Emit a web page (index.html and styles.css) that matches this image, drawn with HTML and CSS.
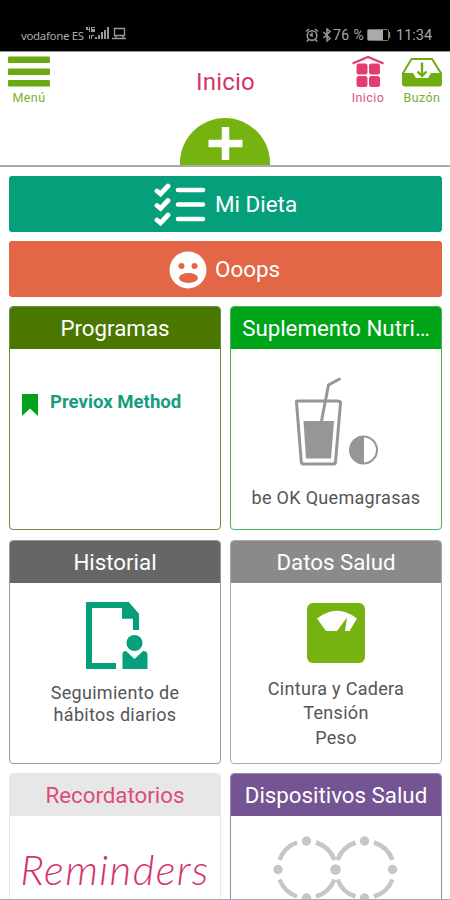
FILE: index.html
```html
<!DOCTYPE html>
<html lang="es">
<head>
<meta charset="utf-8">
<title>Inicio</title>
<link rel="stylesheet" href="styles.css">
</head>
<body>
<div class="screen">
  <div class="status">
    <div class="status-left">
      <span class="carrier">vodafone ES</span>
      <svg width="42" height="16" viewBox="0 0 42 16" fill="#999">
        <path d="M1 1h2v2h1V1h1v5H4V4H1zM6 1h4v1H7v1h3v3H6zM4 9h1v4H4zM6 9h3v1H7v3H6z"/>
        <path d="M10 11h2v2h-2zM13 9h2v4h-2zM16 6h2v7h-2zM19 4h2v9h-2zM22 1h2v12h-2z"/>
        <path d="M29.500 2.500h10v7h-10zM27 12.500h14M31 10v2M38 10v2" fill="none" stroke="#999" stroke-width="1.300"/>
      </svg>
    </div>
    <div class="status-right">
      <svg width="27" height="16" viewBox="0 0 27 16" fill="none" stroke="#999" stroke-width="1.500">
        <circle cx="7" cy="8.500" r="4.800"/><path d="M7 5.500V9L4.500 7.500M1 4.500L4 2M13 4.500L10 2M3.500 12.500L2 14.500M10.500 12.500L12 14.500"/>
        <path d="M18.500 5L25 11.500L22 14V2L25 4.500L18.500 11"/>
      </svg>
      <span class="percent">76 %</span>
      <svg width="24" height="12" viewBox="0 0 24 12"><rect x="0.500" y="0.500" width="21" height="11" rx="1" fill="none" stroke="#777"/><path d="M1 1h15v10H1z" fill="#aaa"/><path d="M22.500 3v6" stroke="#888" stroke-width="1.500"/></svg>
      <span class="time">11:34</span>
    </div>
  </div>

  <header class="header">
    <div class="nav">
      <div class="nav-item menu">
        <svg width="42" height="32" viewBox="0 0 42 32" fill="#69aa10"><rect y="0.500" width="42" height="6.500" rx="1"/><rect y="12.500" width="42" height="6.500" rx="1"/><rect y="24" width="42" height="6.500" rx="1"/></svg>
        <span>Menú</span>
      </div>
      <h1>Inicio</h1>
      <div class="nav-item home">
        <svg width="34" height="32" viewBox="0 0 34 32" fill="#e43e70"><path d="M1.500 7.500L17 1L32.500 7.500" fill="none" stroke="#e43e70" stroke-width="2.400"/><rect x="5.500" y="7.500" width="11" height="11" rx="2.500"/><rect x="18" y="7.500" width="11" height="11" rx="2.500"/><rect x="5.500" y="20" width="11" height="11" rx="2.500"/><rect x="18" y="20" width="11" height="11" rx="2.500"/></svg>
        <span>Inicio</span>
      </div>
      <div class="nav-item inbox">
        <svg width="42" height="32" viewBox="0 0 42 32" fill="none" stroke="#70ad13"><path d="M1.500 18L10.500 3H31L40.500 18" stroke-width="2"/><path d="M1 17H12L15 22H27L30 17H41V27.500Q41 30.500 38 30.500H4Q1 30.500 1 27.500Z" fill="#70ad13" stroke="none"/><path d="M21 6.500V20M16.500 15.500L21 20L25.500 15.500" stroke-width="2.400"/></svg>
        <span>Buzón</span>
      </div>
    </div>
    <svg class="add" width="92" height="48" viewBox="0 0 92 48"><path d="M1 48V46A45 45 0 0 1 91 46V48Z" fill="#76b210"/><path d="M29.500 26.500H63.500M46.500 10V43" stroke="#fff" stroke-width="7.500"/></svg>
  </header>

  <main class="content">
    <div class="action diet">
      <svg width="52" height="44" viewBox="0 0 52 44" fill="none" stroke="#fff" stroke-width="4.800" stroke-linecap="round"><path d="M24 7H49M24 21.500H49M24 36H49" stroke-width="4.600"/><path d="M3 8L6.500 11L14 3M3 22.500L6.500 25.500L14 17.500M3 37L6.500 40L14 32"/></svg>
      <span>Mi Dieta</span>
    </div>
    <div class="action oops">
      <svg width="38" height="38" viewBox="0 0 38 38"><circle cx="19" cy="19" r="18.500" fill="#fff"/><g fill="#e36747"><circle cx="12.500" cy="15" r="3"/><circle cx="25.500" cy="15" r="3"/><ellipse cx="19.500" cy="27" rx="9.500" ry="5"/></g></svg>
      <span>Ooops</span>
    </div>
    <div class="grid">
      <section class="card programs">
        <h2>Programas</h2>
        <div class="program"><svg width="16" height="22" viewBox="0 0 16 22"><path d="M0 0H16V22L8 14.500L0 22Z" fill="#00a418"/></svg><strong>Previox Method</strong></div>
      </section>
      <section class="card supplement">
        <h2>Suplemento Nutri…</h2>
        <svg class="drink" width="84" height="90" viewBox="0 0 84 90" fill="none" stroke="#969696"><path d="M2.500 25.500Q1.500 24 4 24H43Q47 24 46.500 26L41.500 85Q41.300 87 39 87H10Q7.500 87 7.300 85Z" stroke-width="3"/><path d="M9.500 44H40L37 81.500H12Z" fill="#969696" stroke="none"/><path d="M27.500 44L34.500 8L46.500 1.500" stroke-width="3"/><circle cx="69.500" cy="73" r="13.500" stroke-width="2"/><path d="M69.500 59.500A13.500 13.500 0 0 0 69.500 86.500Z" fill="#969696"/></svg>
        <p>be OK Quemagrasas</p>
      </section>
      <section class="card history">
        <h2>Historial</h2>
        <svg class="report" width="62" height="68" viewBox="0 0 62 68" fill="#069f7c"><path d="M0 0H42.500L53 12V28H47V16.500H36V6H6V61H30V67H0Z"/><path d="M36 0H42.500L53 12V16.500H36Z"/><circle cx="48.500" cy="41" r="8"/><path d="M36.500 67V52Q36.500 49 40 49L48.500 57L57 49Q61.500 49 61.500 53V67Z"/></svg>
        <p>Seguimiento de<br>hábitos diarios</p>
      </section>
      <section class="card health">
        <h2>Datos Salud</h2>
        <svg class="scale" width="58" height="60" viewBox="0 0 58 60"><rect width="58" height="60" rx="6" fill="#76b210"/><path d="M10 15.500Q30 0 50 15.500L42.500 28H38L40 14.500L30 28H19Z" fill="#fff"/></svg>
        <p>Cintura y Cadera<br>Tensión<br>Peso</p>
      </section>
      <section class="card reminders">
        <h2>Recordatorios</h2>
        <div class="script">Reminders</div>
      </section>
      <section class="card devices">
        <h2>Dispositivos Salud</h2>
        <svg class="rings" width="126" height="70" viewBox="0 0 126 70" fill="#c6c6c6"><g fill="none" stroke="#c6c6c6" stroke-width="4.500"><path d="M6.500 24A29 29 0 0 1 24 6.500M43 6.500A29 29 0 0 1 61.500 24M64.500 24A29 29 0 0 1 82.500 6.500M101 6.500A29 29 0 0 1 119.500 24M6.500 43.500A29 29 0 0 0 24 60.500M43 60.500A29 29 0 0 0 61.500 43.500M64.500 43.500A29 29 0 0 0 82.500 60.500M101 60.500A29 29 0 0 0 119.500 43.500"/></g><circle cx="33.500" cy="5" r="4.700"/><circle cx="91.500" cy="5" r="4.700"/><circle cx="5" cy="33.500" r="4.700"/><circle cx="62.500" cy="33.500" r="5.300"/><circle cx="119.500" cy="33.500" r="4.700"/><circle cx="33.500" cy="62" r="4.700"/><circle cx="91.500" cy="62" r="4.700"/></svg>
      </section>
    </div>
  </main>
</div>
</body>
</html>
```
FILE: styles.css
```css
* { box-sizing: border-box; }
body { margin: 0; font-family: Roboto, "Liberation Sans", sans-serif; background: #fff; color: #555; }
h1, h2, p { margin: 0; font-weight: 400; }
svg { display: block; flex: none; }
.screen { width: 450px; height: 900px; overflow: hidden; border-bottom: 1px solid #aaa; }

.status { height: 51px; padding: 19px 18px 0 21px; background: #000; color: #aaa; display: flex; justify-content: space-between; }
.status-left, .status-right { display: flex; align-items: center; height: 32px; }
.carrier { font: 11.500px "Noto Sans", sans-serif; letter-spacing: -0.350px; width: 64px; white-space: nowrap; }
.status-left svg { margin-top: -2px; }
.percent { font-size: 14px; letter-spacing: 0.4px; width: 34px; margin-left: 1px; white-space: nowrap; }
.time { font-size: 14.500px; width: 36px; margin-left: 5px; }

.header { height: 116px; border-top: 1px solid #999; border-bottom: 2px solid #aaa; }
.nav { height: 65px; padding: 4px 7px 0 8px; display: flex; }
.nav-item { display: flex; flex-direction: column; align-items: center; font-size: 12.500px; line-height: 15px; letter-spacing: 0.4px; gap: 2px; }
.menu { width: 42px; color: #78ae2b; }
.home { width: 38px; color: #dc5580; }
.inbox { width: 42px; margin-left: 14px; color: #78ae2b; }
.nav h1 { flex: 1; font-size: 24px; line-height: 28px; padding: 12px 0 0 146px; letter-spacing: 0.2px; color: #d43569; }
.add { margin: 0 auto; }

.content { padding: 9px 8px 0 9px; }
.action { height: 56px; border-radius: 3px; color: #fff; font-size: 22.400px; display: flex; align-items: center; }
.action svg { margin-top: 1px; }
.diet { background: #069f7c; padding-left: 145px; gap: 9px; }
.oops { background: #e36747; padding-left: 160px; gap: 8px; margin-top: 9px; }

.grid { margin-top: 9px; display: grid; grid-template-columns: 212px 212px; grid-template-rows: 224px 224px 224px; gap: 9.500px 9px; }
.card { border: 1px solid; border-radius: 4px; overflow: hidden; display: flex; flex-direction: column; align-items: center; text-align: center; }
.card h2 { align-self: stretch; flex: none; height: 42px; line-height: 43px; font-size: 22.300px; color: #fff; white-space: nowrap; }
.card p { font-size: 18px; letter-spacing: 0.3px; color: #555; }
.programs { border-color: #6f8c42; }
.programs h2 { background: #4a7700; }
.program { align-self: stretch; display: flex; gap: 12px; padding: 45px 0 0 12px; color: #169d7d; font-size: 18.600px; line-height: 16px; }
.supplement { border-color: #45b361; }
.supplement h2 { background: #00a418; }
.drink { margin: 28px 0 0 -1px; }
.supplement p { line-height: 24px; margin-top: 19px; }
.history { border-color: #999; }
.history h2 { background: #666; }
.report { margin: 19px 0 0 3px; }
.history p { line-height: 22px; margin-top: 12px; }
.health { border-color: #aaa; }
.health h2 { background: #8a8a8a; }
.scale { margin-top: 20px; }
.health p { line-height: 24.500px; margin-top: 14px; }
.reminders { border-color: #e6e6e6; }
.reminders h2 { background: #e7e7e7; color: #dc4d7a; }
.script { font: italic 300 42px/50px Lato, sans-serif; letter-spacing: 1.400px; color: #d53469; margin-top: 28px; }
.devices { border-color: #9a88b0; }
.devices h2 { background: #745493; }
.rings { margin-top: 20px; }
```
